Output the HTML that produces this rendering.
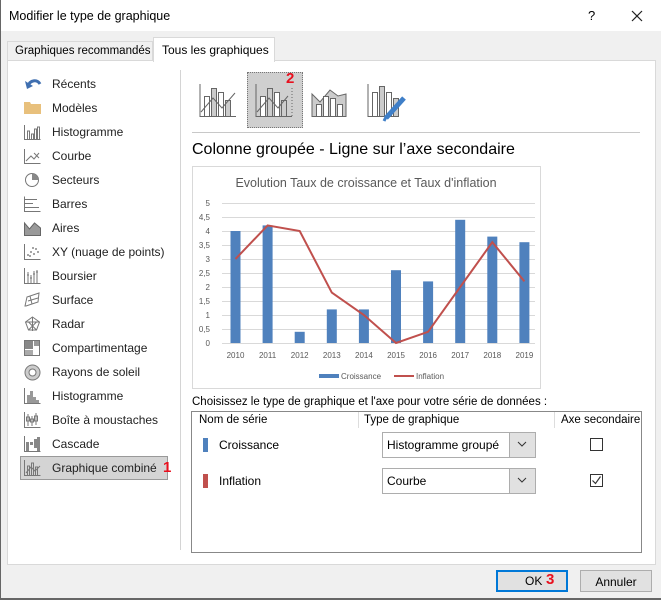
<!DOCTYPE html>
<html><head><meta charset="utf-8"><style>
*{box-sizing:border-box;margin:0;padding:0}
body{width:661px;height:600px;background:#f0f0f0;font-family:"Liberation Sans",sans-serif;font-size:12px;color:#000;position:relative;overflow:hidden}
.abs{position:absolute}
.nav{position:absolute;left:52px;font-size:12px;color:#222}
.ic{position:absolute;left:24px}
</style></head><body>
<div class="abs" style="left:0;top:0;width:661px;height:31px;background:#fff"></div>
<div class="abs" style="left:9px;top:9px;font-size:12.5px">Modifier le type de graphique</div>
<div class="abs" style="left:588px;top:8px;font-size:13px">?</div>
<svg class="abs" style="left:631px;top:10px" width="12" height="12"><path d="M1 1L11 11M11 1L1 11" stroke="#222" stroke-width="1.2"/></svg>
<div class="abs" style="left:0;top:0;width:1px;height:600px;background:#666"></div>
<div class="abs" style="left:0;top:598px;width:661px;height:2px;background:#666"></div>
<!-- tabs -->
<div class="abs" style="left:7px;top:41px;width:146px;height:20px;border:1px solid #d9d9d9;border-bottom:none;background:#f0f0f0;font-size:11.5px;padding:3px 0 0 7px">Graphiques recommandés</div>
<div class="abs" style="left:7px;top:60px;width:649px;height:505px;background:#fff;border:1px solid #d9d9d9"></div>
<div class="abs" style="left:153px;top:37px;width:122px;height:25px;background:#fff;border:1px solid #d9d9d9;border-bottom:none;font-size:12px;padding:5px 0 0 8px">Tous les graphiques</div>
<div class="abs" style="left:180px;top:70px;width:1px;height:480px;background:#d4d4d4"></div>
<!-- nav -->
<svg class="ic" style="top:77px" width="18" height="14"><path d="M4 9C6 3 13 2 16 7" stroke="#3f6fb0" stroke-width="3" fill="none"/><path d="M1 4L3 12L9 9Z" fill="#3f6fb0"/></svg>
<div class="nav" style="top:77px">Récents</div>
<svg class="ic" style="top:100px" width="17" height="14"><path d="M0 2h6l1 2h10v10H0z" fill="#e8c07c"/></svg>
<div class="nav" style="top:101px">Modèles</div>
<svg class="ic" style="top:124px" width="17" height="16" fill="none" stroke="#777"><path d="M.5 1v14.5h16M3.5 15V7h2v8M7.5 15V10h2v5M10.5 15V5h2v10M13.5 15V3h2v12"/></svg>
<div class="nav" style="top:125px">Histogramme</div>
<svg class="ic" style="top:148px" width="17" height="16" fill="none" stroke="#777"><path d="M.5 1v14.5h16M2 13l5-5 3 3 5-6M10 5l5 5"/></svg>
<div class="nav" style="top:149px">Courbe</div>
<svg class="ic" style="top:172px" width="16" height="16"><circle cx="8" cy="8" r="6.5" fill="#fff" stroke="#777"/><path d="M8 8V1.5A6.5 6.5 0 0 1 14.5 8Z" fill="#888"/></svg>
<div class="nav" style="top:173px">Secteurs</div>
<svg class="ic" style="top:196px" width="17" height="16" fill="none" stroke="#777"><path d="M.5 .5v15h16M1 3.5h12M1 7.5h8M1 11.5h14"/></svg>
<div class="nav" style="top:197px">Barres</div>
<svg class="ic" style="top:220px" width="17" height="16"><path d="M.5 15.5V3l5 6 5-6 6 5v7.5z" fill="#999" stroke="#666"/></svg>
<div class="nav" style="top:221px">Aires</div>
<svg class="ic" style="top:244px" width="17" height="16" fill="#888"><path d="M.5 0v15.5h16" stroke="#777" fill="none"/><circle cx="4" cy="11" r="1"/><circle cx="7" cy="8" r="1"/><circle cx="10" cy="10" r="1"/><circle cx="12" cy="5" r="1"/><circle cx="6" cy="12" r="1"/><circle cx="14" cy="8" r="1"/><circle cx="9" cy="4" r="1"/></svg>
<div class="nav" style="top:245px">XY (nuage de points)</div>
<svg class="ic" style="top:268px" width="17" height="16" fill="none" stroke="#777"><path d="M.5 0v15.5h16M4 4v11M7 7v8M10 3v12M13 2v13M3 7h2M6 10h2M9 6h2M12 4h2"/></svg>
<div class="nav" style="top:269px">Boursier</div>
<svg class="ic" style="top:292px" width="17" height="16" fill="none" stroke="#777"><path d="M1 14l2-9 12-4-1 9-12 4zM4 9l10-3M6 4l2 8" /></svg>
<div class="nav" style="top:293px">Surface</div>
<svg class="ic" style="top:316px" width="17" height="16" fill="none" stroke="#777"><path d="M8.5 1l7 5-3 8h-8l-3-8zM8.5 1v14M1.5 6l14 0M4.5 14l8-8M12.5 14l-8-8"/></svg>
<div class="nav" style="top:317px">Radar</div>
<svg class="ic" style="top:340px" width="16" height="16"><rect x=".5" y=".5" width="15" height="15" fill="#fff" stroke="#777"/><rect x="1" y="1" width="8" height="8" fill="#888"/><rect x="1" y="10" width="8" height="5" fill="#aaa"/><rect x="10" y="1" width="5" height="5" fill="#999"/></svg>
<div class="nav" style="top:341px">Compartimentage</div>
<svg class="ic" style="top:364px" width="17" height="17"><circle cx="8.5" cy="8.5" r="7.5" fill="#ccc" stroke="#777"/><circle cx="8.5" cy="8.5" r="3.5" fill="#fff" stroke="#777"/></svg>
<div class="nav" style="top:365px">Rayons de soleil</div>
<svg class="ic" style="top:388px" width="17" height="16"><path d="M.5 0v15.5h16" stroke="#777" fill="none"/><path d="M3 15V7h3v8zM6 15V3h3v12zM9 15V9h3v6zM12 15v-3h3v3z" fill="#999"/></svg>
<div class="nav" style="top:389px">Histogramme</div>
<svg class="ic" style="top:412px" width="17" height="16" fill="none" stroke="#777"><path d="M.5 0v15.5h16M4 2v12M8 4v10M12 1v12M2.5 5h3v4h-3zM6.5 7h3v3h-3zM10.5 4h3v5h-3z"/></svg>
<div class="nav" style="top:413px">Boîte à moustaches</div>
<svg class="ic" style="top:436px" width="17" height="16"><path d="M.5 0v15.5h16" stroke="#777" fill="none"/><path d="M2 6h3v9H2zM6 6h3v3H6zM10 3h3v9h-3zM13 1h3v14h-3z" fill="#888"/></svg>
<div class="nav" style="top:437px">Cascade</div>
<div class="abs" style="left:20px;top:456px;width:148px;height:24px;background:#d4d4d4;border:1px solid #999"></div>
<svg class="ic" style="top:460px" width="17" height="16" fill="none" stroke="#777"><path d="M.5 0v15.5h16M3.5 15V6h2v9M7.5 15V3h2v12M11.5 15V7h2v8M2 13l5-6 4 4 5-5"/></svg>
<div class="nav" style="top:461px">Graphique combiné</div>
<div class="abs" style="left:163px;top:459px;color:#e8101e;font-size:15px;font-weight:bold">1</div>
<!-- chart type icons -->
<div class="abs" style="left:247px;top:72px;width:56px;height:56px;background:#cfcfcf;border:1px dotted #777"></div>
<div class="abs" style="left:286px;top:70px;color:#e8101e;font-size:15px;font-weight:bold">2</div>
<svg class="abs" style="left:198px;top:82px" width="230" height="40" fill="none" stroke="#666">
<g><path d="M2 2v32.5h36"/><rect x="6.5" y="14.5" width="5" height="20" fill="#fff"/><rect x="13.5" y="6.5" width="5" height="28" fill="#ccc"/><rect x="20.5" y="10.5" width="5" height="24" fill="#fff"/><rect x="27.5" y="18.5" width="5" height="16" fill="#ccc"/><path d="M3 30l12-14 9 10 13-15"/></g>
<g transform="translate(56,0)"><path d="M2 2v32.5h36"/><rect x="6.5" y="14.5" width="5" height="20" fill="#fff"/><rect x="13.5" y="6.5" width="5" height="28" fill="#ccc"/><rect x="20.5" y="10.5" width="5" height="24" fill="#fff"/><rect x="27.5" y="18.5" width="5" height="16" fill="#ccc"/><path d="M3 30l12-14 9 10 10-12"/><path d="M38 6v28" stroke-dasharray="1 2"/></g>
<g transform="translate(112,0)"><path d="M2 12l8 8 10-12 8 6 8-2v22.5H2z" fill="#ccc"/><rect x="6.5" y="22.5" width="5" height="12" fill="#fff"/><rect x="13.5" y="14.5" width="5" height="20" fill="#fff"/><rect x="20.5" y="16.5" width="5" height="18" fill="#fff"/><rect x="27.5" y="22.5" width="5" height="12" fill="#fff"/></g>
<g transform="translate(168,0)"><path d="M2 2v32.5h30"/><rect x="6.5" y="10.5" width="5" height="24" fill="#fff"/><rect x="13.5" y="4.5" width="5" height="30" fill="#ccc"/><rect x="20.5" y="10.5" width="5" height="24" fill="#fff"/><rect x="27.5" y="16.5" width="5" height="18" fill="#ccc"/><path d="M20 36l18-20" stroke="#3f7fc8" stroke-width="5"/><path d="M18 39l2-4" stroke="#3f7fc8" stroke-width="3"/></g>
</svg>
<div class="abs" style="left:192px;top:132px;width:448px;height:1px;background:#c8c8c8"></div>
<div class="abs" style="left:192px;top:141px;font-size:16px">Colonne groupée - Ligne sur l’axe secondaire</div>
<!-- chart -->
<svg class="abs" style="left:192px;top:166px" width="349" height="223" font-family="Liberation Sans" font-size="8" fill="#595959">
<rect x=".5" y=".5" width="348" height="222" fill="#fff" stroke="#d9d9d9"/>
<text x="174" y="21" text-anchor="middle" font-size="12.5">Evolution Taux de croissance et Taux d'inflation</text>
<g stroke="#d9d9d9"><path d="M30 37.5h313M30 51.5h313M30 65.5h313M30 79.5h313M30 93.5h313M30 107.5h313M30 121.5h313M30 135.5h313M30 149.5h313M30 163.5h313M30 177.5h313"/></g>
<g text-anchor="end"><text x="18" y="40">5</text><text x="18" y="54">4,5</text><text x="18" y="68">4</text><text x="18" y="82">3,5</text><text x="18" y="96">3</text><text x="18" y="110">2,5</text><text x="18" y="124">2</text><text x="18" y="138">1,5</text><text x="18" y="152">1</text><text x="18" y="166">0,5</text><text x="18" y="180">0</text></g>
<g><text x="357" y="40">2,5</text><text x="357" y="68">2</text><text x="357" y="96">1,5</text><text x="357" y="124">1</text><text x="357" y="152">0,5</text><text x="357" y="180">0</text></g>
<g fill="#4f81bd"><rect x="38.5" y="65" width="10" height="112"/><rect x="70.6" y="59.4" width="10" height="117.6"/><rect x="102.7" y="165.8" width="10" height="11.2"/><rect x="134.8" y="143.4" width="10" height="33.6"/><rect x="166.9" y="143.4" width="10" height="33.6"/><rect x="199" y="104.2" width="10" height="72.8"/><rect x="231.1" y="115.4" width="10" height="61.6"/><rect x="263.2" y="53.8" width="10" height="123.2"/><rect x="295.3" y="70.6" width="10" height="106.4"/><rect x="327.4" y="76.2" width="10" height="100.8"/></g>
<polyline points="43.5,93 75.6,59.4 107.7,65 139.8,126.6 171.9,149 204,177 236.1,165.8 268.2,121 300.3,76.2 332.4,115.4" fill="none" stroke="#c0504d" stroke-width="2"/>
<g text-anchor="middle"><text x="43.5" y="192">2010</text><text x="75.6" y="192">2011</text><text x="107.7" y="192">2012</text><text x="139.8" y="192">2013</text><text x="171.9" y="192">2014</text><text x="204" y="192">2015</text><text x="236.1" y="192">2016</text><text x="268.2" y="192">2017</text><text x="300.3" y="192">2018</text><text x="332.4" y="192">2019</text></g>
<rect x="127" y="208" width="20" height="4" fill="#4f81bd"/><text x="149" y="213">Croissance</text>
<path d="M202 210h20" stroke="#c0504d" stroke-width="2"/><text x="224" y="213">Inflation</text>
</svg>
<div class="abs" style="left:192px;top:396px;font-size:11.5px">Choisissez le type de graphique et l'axe pour votre série de données :</div>
<div class="abs" style="left:191px;top:411px;width:451px;height:142px;border:1px solid #888"></div>
<div class="abs" style="left:199px;top:414px;font-size:11.5px">Nom de série</div>
<div class="abs" style="left:358px;top:412px;width:1px;height:16px;background:#ddd"></div>
<div class="abs" style="left:364px;top:414px;font-size:11.5px">Type de graphique</div>
<div class="abs" style="left:554px;top:412px;width:1px;height:16px;background:#ddd"></div>
<div class="abs" style="left:561px;top:414px;font-size:11.5px">Axe secondaire</div>
<div class="abs" style="left:203px;top:438px;width:5px;height:14px;background:#4f81bd"></div>
<div class="abs" style="left:219px;top:438px;font-size:12px">Croissance</div>
<div class="abs" style="left:203px;top:474px;width:5px;height:14px;background:#c0504d"></div>
<div class="abs" style="left:219px;top:474px;font-size:12px">Inflation</div>
<div class="abs" style="left:382px;top:432px;width:154px;height:26px;border:1px solid #adadad;background:#fff;padding:5px 0 0 4px;font-size:12px">Histogramme groupé</div>
<div class="abs" style="left:509px;top:433px;width:26px;height:24px;background:#e1e1e1;border-left:1px solid #adadad"></div>
<svg class="abs" style="left:517px;top:441px" width="10" height="6"><path d="M1 1l4 4 4-4" stroke="#333" fill="none"/></svg>
<div class="abs" style="left:382px;top:468px;width:154px;height:26px;border:1px solid #adadad;background:#fff;padding:5px 0 0 4px;font-size:12px">Courbe</div>
<div class="abs" style="left:509px;top:469px;width:26px;height:24px;background:#e1e1e1;border-left:1px solid #adadad"></div>
<svg class="abs" style="left:517px;top:477px" width="10" height="6"><path d="M1 1l4 4 4-4" stroke="#333" fill="none"/></svg>
<div class="abs" style="left:590px;top:438px;width:13px;height:13px;border:1px solid #333;background:#fff"></div>
<div class="abs" style="left:590px;top:474px;width:13px;height:13px;border:1px solid #333;background:#fff"></div>
<svg class="abs" style="left:591px;top:475px" width="11" height="11"><path d="M1.5 5.5l3 3 5-7" stroke="#333" fill="none" stroke-width="1.2"/></svg>
<!-- buttons -->
<div class="abs" style="left:496px;top:570px;width:72px;height:22px;border:2px solid #0078d7;background:#e1e1e1"></div>
<div class="abs" style="left:525px;top:574px;font-size:12px">OK</div>
<div class="abs" style="left:546px;top:571px;color:#e8101e;font-size:15px;font-weight:bold">3</div>
<div class="abs" style="left:580px;top:570px;width:72px;height:22px;border:1px solid #adadad;background:#e1e1e1;text-align:center;padding-top:4px;font-size:12px">Annuler</div>
</body></html>
